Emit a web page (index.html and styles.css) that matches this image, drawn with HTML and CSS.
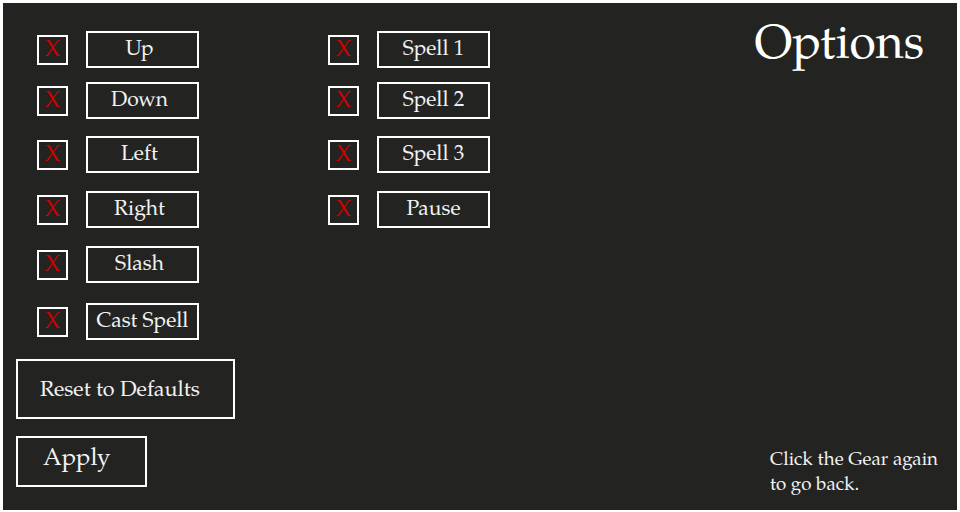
FILE: index.html
```html
<!DOCTYPE html>
<html>
<head>
<meta charset="utf-8">
<link rel="stylesheet" href="styles.css">
</head>
<body>
<div class="screen">
  <div class="left">
    <div class="bindings">
      <div class="col">
        <div class="row r1"><span class="check">X</span><span class="key shift">Up</span></div>
        <div class="row r2"><span class="check">X</span><span class="key shift">Down</span></div>
        <div class="row r3"><span class="check">X</span><span class="key shift">Left</span></div>
        <div class="row r4"><span class="check">X</span><span class="key shift">Right</span></div>
        <div class="row r5"><span class="check">X</span><span class="key shift">Slash</span></div>
        <div class="row r6"><span class="check">X</span><span class="key">Cast Spell</span></div>
      </div>
      <div class="col">
        <div class="row r1"><span class="check">X</span><span class="key">Spell 1</span></div>
        <div class="row r2"><span class="check">X</span><span class="key">Spell 2</span></div>
        <div class="row r3"><span class="check">X</span><span class="key">Spell 3</span></div>
        <div class="row r4"><span class="check">X</span><span class="key">Pause</span></div>
      </div>
    </div>
    <div class="btn reset">Reset to Defaults</div>
    <div class="btn apply">Apply</div>
  </div>
  <div class="right">
    <h1 class="title">Options</h1>
    <p class="hint">Click the Gear again<br>to go back.</p>
  </div>
</div>
</body>
</html>
```
FILE: styles.css
```css
html, body {
  margin: 0;
  padding: 0;
  background: #ffffff;
}
body {
  width: 960px;
  height: 512px;
  overflow: hidden;
}
.screen {
  box-sizing: border-box;
  margin: 3px 3px 0 3px;
  width: 954px;
  height: 507px;
  background: #232422;
  color: #f2f2f2;
  font-family: "Palatino Linotype", "Palatino", "Book Antiqua", "P052", "URW Palladio L", "TeX Gyre Pagella", "Liberation Serif", serif;
  display: flex;
  justify-content: space-between;
}
.left {
  padding: 28px 0 0 13px;
  display: flex;
  flex-direction: column;
}
.bindings {
  display: flex;
  gap: 129px;
  margin-left: 21px;
}
.col {
  display: flex;
  flex-direction: column;
}
.row {
  display: flex;
  align-items: center;
  gap: 18px;
}
.r2 { margin-top: 14px; }
.r3 { margin-top: 17px; }
.r4 { margin-top: 18px; }
.r5 { margin-top: 18px; }
.r6 { margin-top: 20px; }
.check {
  box-sizing: border-box;
  width: 31px;
  height: 30px;
  border: 2px solid #ffffff;
  color: #d00000;
  font-size: 23px;
  line-height: 28px;
  text-align: center;
}
.key {
  box-sizing: border-box;
  width: 113px;
  height: 37px;
  border: 2px solid #ffffff;
  font-size: 21px;
  line-height: 36px;
  text-align: center;
  white-space: nowrap;
}
.key.shift {
  padding-right: 6px;
}
.btn {
  box-sizing: border-box;
  border: 2px solid #ffffff;
  white-space: nowrap;
}
.reset {
  margin-top: 19px;
  width: 219px;
  height: 60px;
  padding: 4px 0 0 22px;
  font-size: 21.5px;
  line-height: 52px;
}
.apply {
  margin-top: 17px;
  width: 131px;
  height: 51px;
  padding-left: 25px;
  font-size: 24px;
  line-height: 44px;
}
.right {
  display: flex;
  flex-direction: column;
  justify-content: space-between;
  align-items: flex-end;
  padding: 16px 20px 12px 0;
}
.title {
  margin: 0 13px 0 0;
  font-weight: normal;
  font-size: 48px;
  line-height: 56px;
  color: #ffffff;
}
.hint {
  margin: 0;
  width: 167px;
  font-size: 18.7px;
  line-height: 25px;
  white-space: nowrap;
}
```
